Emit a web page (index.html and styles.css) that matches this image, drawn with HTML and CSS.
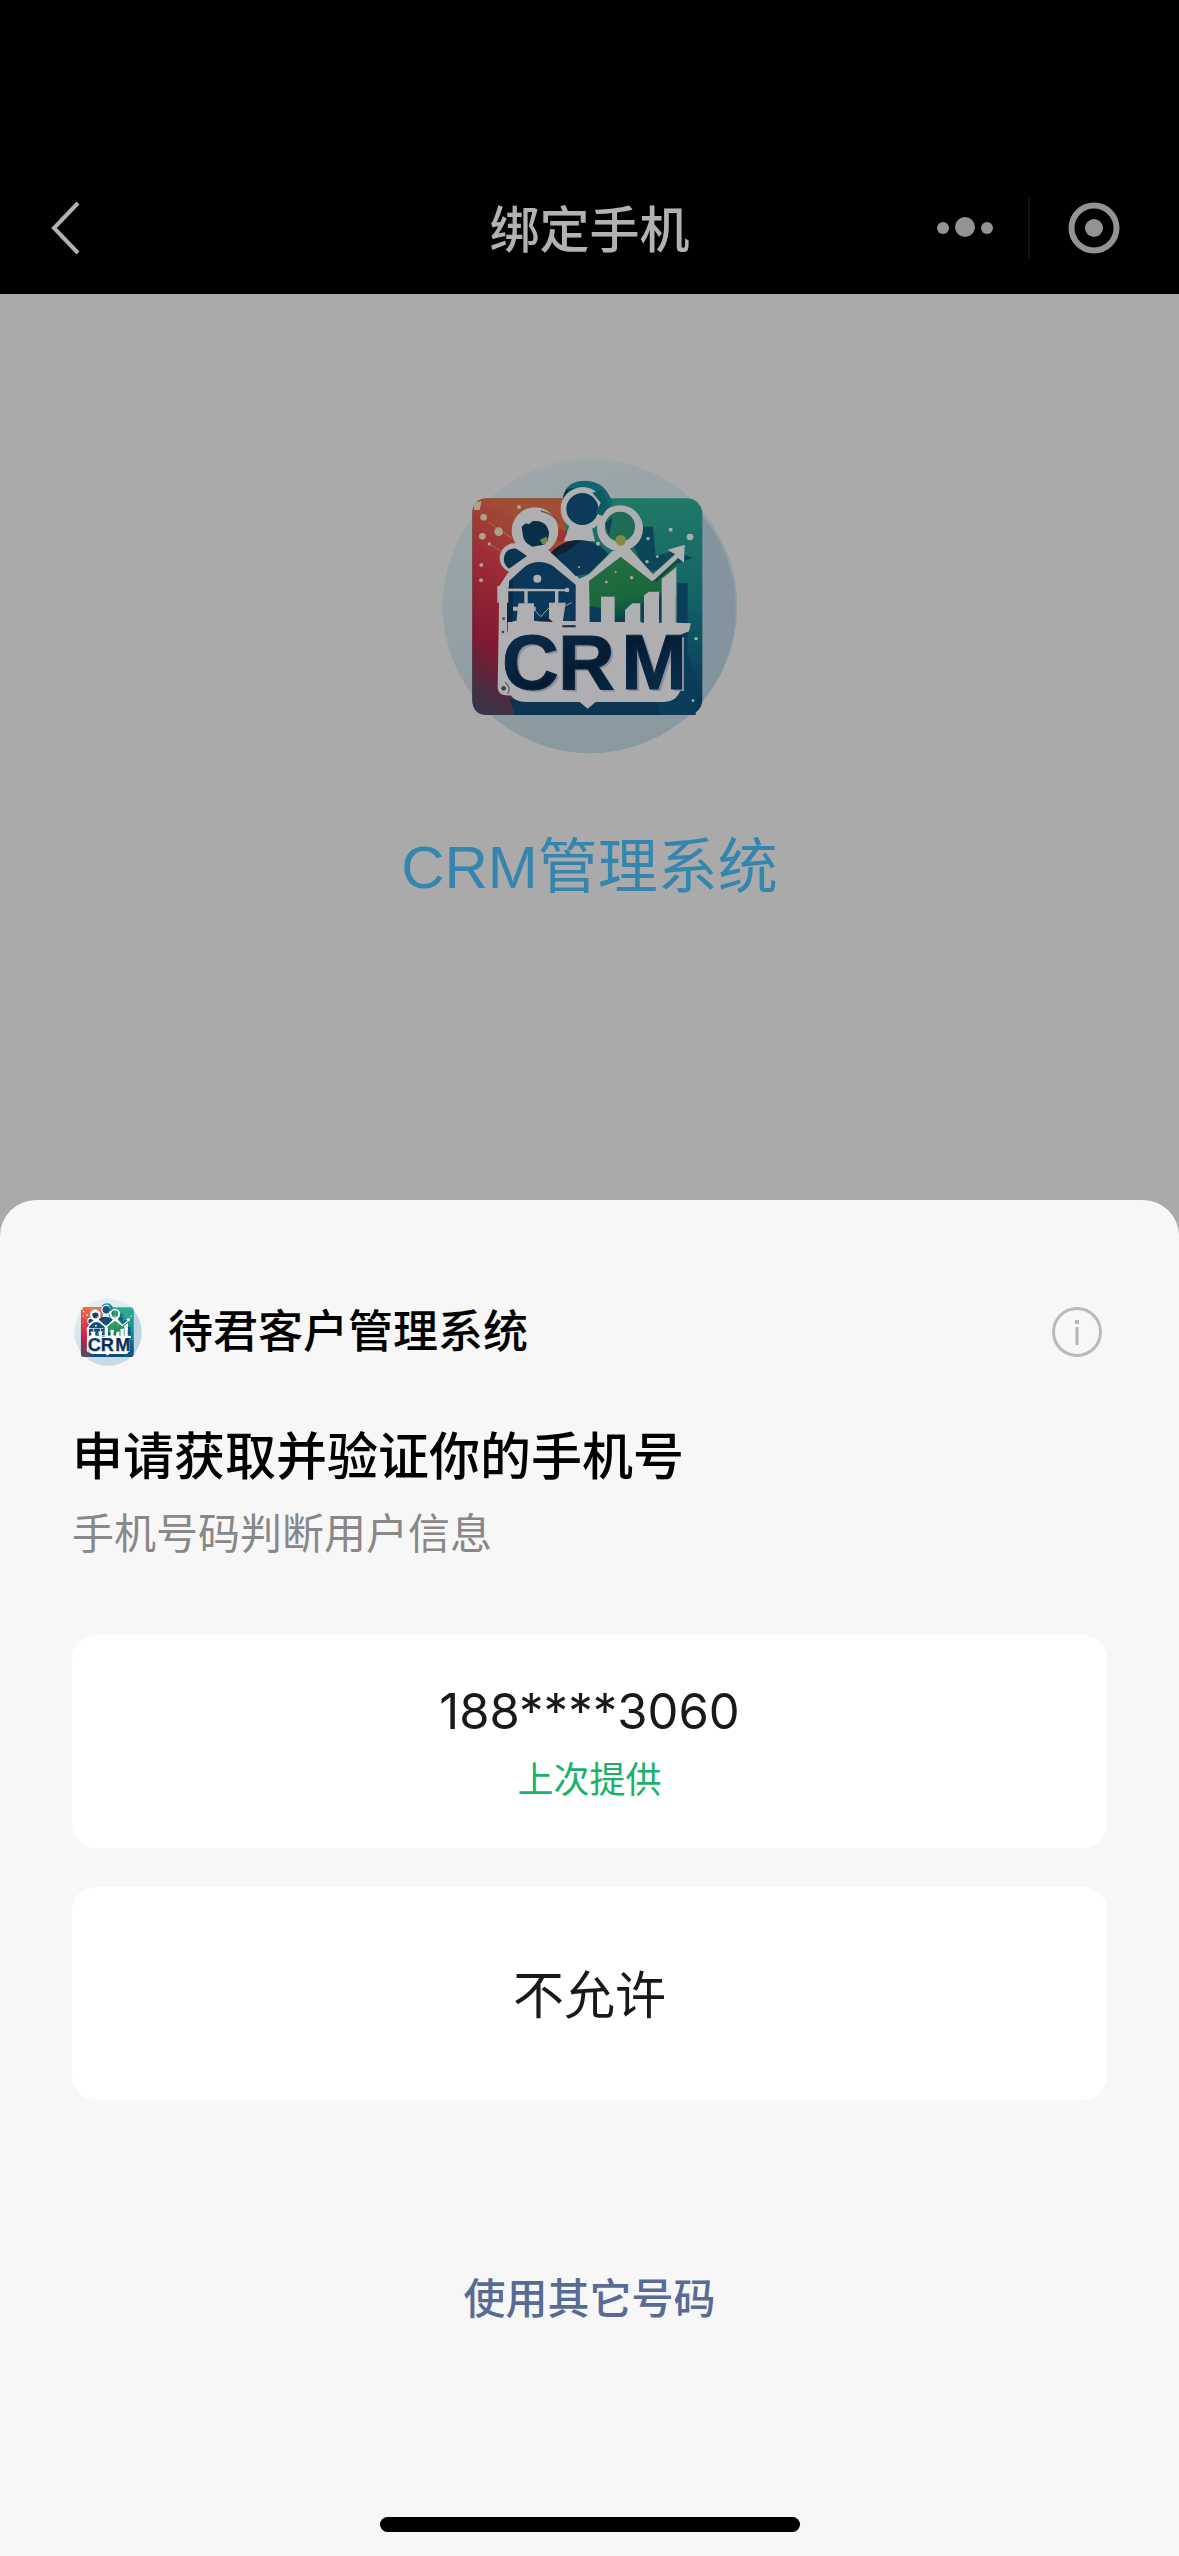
FILE: index.html
```html
<!DOCTYPE html>
<html lang="zh-CN">
<head>
  <meta charset="UTF-8">
  <meta name="viewport" content="width=device-width, initial-scale=1.0">
  <title>绑定手机</title>
  <link rel="stylesheet" href="styles.css">
</head>
<body>
  <!-- logo, used on the page and in the sheet -->
  <svg class="defs" aria-hidden="true">
    <defs>
      <linearGradient id="disc" x1="0" y1="0" x2="0.3" y2="1">
        <stop offset="0" stop-color="#e6f3f5"/>
        <stop offset="1" stop-color="#c6dbe5"/>
      </linearGradient>
      <linearGradient id="tile" x1="0" y1="0" x2="0" y2="1">
        <stop offset="0" stop-color="#2fae94"/>
        <stop offset="0.45" stop-color="#1b9092"/>
        <stop offset="0.8" stop-color="#116088"/>
        <stop offset="1" stop-color="#0f4a74"/>
      </linearGradient>
      <linearGradient id="tileRed" x1="0.3" y1="0" x2="0" y2="1">
        <stop offset="0" stop-color="#e8704c"/>
        <stop offset="0.3" stop-color="#e0404c"/>
        <stop offset="0.65" stop-color="#b82446"/>
        <stop offset="0.9" stop-color="#5c4662"/>
        <stop offset="1" stop-color="#4f5268"/>
      </linearGradient>
      <linearGradient id="leaf" x1="0" y1="0" x2="0.3" y2="1">
        <stop offset="0" stop-color="#39a05a"/>
        <stop offset="0.7" stop-color="#239457"/>
        <stop offset="1" stop-color="#0f5a70"/>
      </linearGradient>
      <linearGradient id="ink" x1="0" y1="0" x2="1" y2="1">
        <stop offset="0" stop-color="#0f4a78"/>
        <stop offset="0.5" stop-color="#082748"/>
        <stop offset="1" stop-color="#114b78"/>
      </linearGradient>
      <symbol id="crm-logo" viewBox="39 56 888 888">
        <circle cx="483" cy="500" r="442" fill="url(#disc)"/>
        <path d="M805 210A442 442 0 0 1 805 805Z" fill="#bcd4e3"/>
        <rect x="130" y="177" width="690" height="650" rx="46" fill="url(#tile)"/>
        <path d="M176 177H410V500L250 827H176Q130 827 130 781V223Q130 177 176 177Z" fill="url(#tileRed)"/>
        <path d="M240 780H560L500 827H262Z" fill="#104d76"/>
        <path d="M745 432H776V640L800 720V827H690V560H745Z" fill="#105780"/>
        <path d="M610 310L635 262L672 262L680 350L735 335L792 355L740 375L650 400Z" fill="#12667f"/>
        <path d="M402 172Q412 124 470 124Q530 126 550 190L520 250H410Z" fill="#1793a0"/>
        <path d="M402 172L412 150L440 145L410 200Z" fill="#104770"/>

        <!-- white silhouette -->
        <g fill="#fbfafc">
          <circle cx="461" cy="209" r="66"/>
          <circle cx="573" cy="267" r="69"/>
          <circle cx="318" cy="274" r="70"/>
          <circle cx="256" cy="356" r="44"/>
          <path d="M424 250H485L498 306H405Z"/>
          <path d="M300 320H345L452 418L480 405L550 335L600 325L672 405L738 345L716 331L767 316L765 370L746 355L742 388V550L786 552L780 576L757 585V740Q750 786 705 788H500L476 808L452 788H290Q258 788 245 768Q206 770 206 745L211 440L234 405Z"/>
        </g>
        <path d="M366 340Q400 302 455 302Q510 305 538 345L480 402L440 410L420 390Z" fill="#12507c"/>
        <path d="M366 340Q400 302 455 302Q430 330 382 350Z" fill="#173047"/>
        <path d="M390 265L415 280L400 306H385Z" fill="#e5484f"/>
        <circle cx="460" cy="209" r="48" fill="#105482"/>
        <path d="M515 190L490 160L520 150L540 200L520 230L500 222Z" fill="#17818e"/>
        <circle cx="573" cy="262" r="45" fill="#2c9a7b"/>
        <path d="M528 252L550 235L540 290Z" fill="#165f76"/>
        <circle cx="575" cy="303" r="16" fill="#b7c765"/>
        <path d="M278 262L290 252L300 255L310 246Q340 242 354 262L360 278Q360 305 345 316L310 322Q284 310 282 290Z" fill="#0e4269"/>
        <path d="M332 302L352 292L358 306L342 316Z" fill="#a3c26b"/>
        <path d="M225 355Q230 325 262 328L294 350L240 388Q222 374 225 355Z" fill="#0f4a72"/>
        <path d="M240 425L290 380Q330 356 372 380L440 436V545H240Z" fill="#10507f"/>
        <path d="M234 450V580L252 545V420Z" fill="#0e3c62"/>
        <path d="M480 425L575 352L668 425L692 415L745 360V380L700 425V548H560L483 548Z" fill="url(#leaf)"/>
        <path d="M482 500L530 510L585 580L560 548H482Z" fill="#105780"/>
        <path d="M672 470H740V550H640L600 520Z" fill="#10607c"/>

        <!-- buildings and chart bars -->
        <g fill="#fbfafc">
          <path d="M205 440H238V490H205Z"/>
          <path d="M222 447L420 450V456H222ZM286 450H296V492H286ZM378 450H388V492H378Z"/>
          <path d="M268 492H315V570H260ZM360 490H410L398 570H360ZM252 502H320V514H252Z"/>
          <path d="M236 548H590V578H236Z"/>
          <path d="M516 472H557V560H516Z"/>
          <path d="M588 512L610 492H634V570H588Z"/>
          <path d="M645 468L660 457H690V570H645Z"/>
          <path d="M698 418L740 385V560H698Z"/>
          <circle cx="325" cy="418" r="12"/>
          <circle cx="414" cy="452" r="7"/>
        </g>
        <path d="M315 510L335 532L375 490L408 500L428 490" fill="none" stroke="#d8e7ef" stroke-width="3"/>
        <path d="M325 546L350 530L372 548ZM400 558H440V564H400Z" fill="#123a60"/>
        <path d="M678 426L750 360" stroke="#147057" stroke-width="9"/>

        <!-- sparks -->
        <g fill="#f7e9c5">
          <path d="M132 190L158 186L152 212H136Z"/>
          <circle cx="164" cy="234" r="10"/>
          <circle cx="209" cy="277" r="13"/>
          <circle cx="160" cy="291" r="10"/>
          <circle cx="181" cy="314" r="5"/>
          <circle cx="157" cy="377" r="6"/>
          <circle cx="156" cy="423" r="6"/>
          <circle cx="270" cy="203" r="6"/>
        </g>
        <path d="M178 248L248 296M181 314L218 336" stroke="#f0c9b4" stroke-width="2"/>
        <path d="M335 215Q370 222 392 250" fill="none" stroke="#b46a5c" stroke-width="4"/>
        <g fill="#eefaf6">
          <circle cx="725" cy="271" r="6"/>
          <circle cx="783" cy="293" r="10"/>
          <circle cx="657" cy="298" r="5"/>
          <circle cx="685" cy="352" r="4"/>
          <circle cx="654" cy="367" r="5"/>
          <circle cx="507" cy="313" r="6"/>
          <circle cx="801" cy="598" r="5"/>
          <circle cx="792" cy="784" r="4"/>
          <circle cx="450" cy="383" r="3"/>
          <circle cx="608" cy="415" r="5"/>
          <circle cx="532" cy="428" r="4"/>
          <circle cx="560" cy="398" r="3"/>
        </g>
        <g fill="#4d6272">
          <circle cx="224" cy="747" r="7"/>
          <circle cx="224" cy="538" r="4"/>
          <circle cx="222" cy="578" r="4"/>
        </g>
        <path d="M228 728Q248 745 236 764" fill="none" stroke="#8696a1" stroke-width="4"/>
        <text class="logo-shade" x="226 394 584" y="756">CRM</text>
        <text class="logo-text" x="219 387 577" y="749">CRM</text>
      </symbol>
    </defs>
  </svg>

  <div class="page">
    <header class="navbar">
      <button type="button" class="back" aria-label="返回">
        <svg width="40" height="60" viewBox="0 0 40 60" fill="none" stroke="#fff" stroke-width="4">
          <path d="M31 5L7 30L31 55"/>
        </svg>
      </button>
      <h1>绑定手机</h1>
      <div class="capsule">
        <button type="button" aria-label="更多">
          <svg width="60" height="60" viewBox="0 0 60 60" fill="#d3d3d3">
            <circle cx="8" cy="30" r="6"/>
            <circle cx="30" cy="29" r="10"/>
            <circle cx="52" cy="30" r="6"/>
          </svg>
        </button>
        <button type="button" aria-label="关闭">
          <svg width="60" height="60" viewBox="0 0 60 60">
            <circle cx="30" cy="30" r="22.5" fill="none" stroke="#d3d3d3" stroke-width="6"/>
            <circle cx="30" cy="30" r="9" fill="#d3d3d3"/>
          </svg>
        </button>
      </div>
    </header>
    <main class="intro">
      <svg class="logo" role="img" aria-label="CRM"><use href="#crm-logo"/></svg>
      <h2>CRM管理系统</h2>
    </main>
  </div>

  <div class="mask"></div>

  <section class="sheet" role="dialog" aria-labelledby="sheetTitle">
    <div class="app">
      <svg class="app-logo" aria-hidden="true"><use href="#crm-logo"/></svg>
      <span class="app-name">待君客户管理系统</span>
      <button type="button" class="info" aria-label="说明">
        <svg width="60" height="60" viewBox="0 0 60 60">
          <circle cx="30" cy="30" r="23.5" fill="none" stroke="#bbb" stroke-width="3"/>
          <path d="M28 18h4v4h-4zM28.5 25h3v18h-3z" fill="#b5b5b5"/>
        </svg>
      </button>
    </div>
    <h3 id="sheetTitle">申请获取并验证你的手机号</h3>
    <p class="desc">手机号码判断用户信息</p>
    <div class="options">
      <button type="button" class="option">
        <span class="number">188****3060</span>
        <span class="hint">上次提供</span>
      </button>
      <button type="button" class="option">不允许</button>
    </div>
    <a href="#" class="other">使用其它号码</a>
    <div class="home-bar"></div>
  </section>
</body>
</html>
```
FILE: styles.css
```css
* {
  box-sizing: border-box;
}
body {
  margin: 0;
  background-color: #f4f4f4;
  font-family: Inter, "Noto Sans CJK SC", sans-serif;
}
h1, h2, h3, p {
  margin: 0;
}
button {
  padding: 0;
  border: none;
  background: none;
  font-family: inherit;
  color: inherit;
  cursor: pointer;
}
svg {
  display: block;
}
.defs {
  position: absolute;
  width: 0;
  height: 0;
}
.page {
  min-height: 100vh;
}
.navbar {
  display: grid;
  grid-template-columns: 1fr auto 1fr;
  align-items: center;
  padding: 162px 42px 0;
  height: 294px;
  background-color: #000;
  color: #fff;
}
.back {
  justify-self: start;
  padding-left: 5px;
}
.navbar h1 {
  padding-top: 4px;
  font-size: 50px;
  font-weight: 500;
  line-height: 72px;
}
.capsule {
  display: flex;
  justify-self: end;
}
.capsule button:first-child {
  padding: 0 33px;
  border-right: 2px solid #1a1a1a;
}
.capsule button:last-child {
  padding: 0 13px 0 34px;
}
.intro {
  display: flex;
  flex-direction: column;
  align-items: center;
  padding-top: 164px;
}
.logo {
  width: 296px;
  height: 296px;
}
.logo-text, .logo-shade {
  font-family: "Liberation Sans", Arial, sans-serif;
  font-size: 236px;
  font-weight: bold;
}
.logo-text {
  fill: url(#ink);
  stroke: #0c3a62;
  stroke-width: 3px;
}
.logo-shade {
  fill: #c3cbda;
}
.intro h2 {
  margin-top: 72px;
  font-family: "Liberation Sans", "Noto Sans CJK SC", sans-serif;
  font-size: 60px;
  font-weight: 400;
  line-height: 84px;
  color: #4cc0fa;
}
.mask {
  position: fixed;
  inset: 0;
  background-color: rgba(0, 0, 0, 0.3);
}
.sheet {
  position: fixed;
  left: 0;
  right: 0;
  bottom: 0;
  display: flex;
  flex-direction: column;
  padding: 96px 72px 24px;
  border-radius: 36px 36px 0 0;
  background-color: #f7f7f7;
}
.app {
  display: flex;
  align-items: center;
  height: 72px;
}
.app-logo {
  width: 72px;
  height: 72px;
  padding: 2px;
}
.app-name {
  margin-left: 24px;
  font-size: 45px;
  font-weight: 500;
  line-height: 60px;
}
.info {
  margin-left: auto;
}
.sheet h3 {
  margin-top: 53px;
  font-size: 51px;
  font-weight: 500;
  line-height: 72px;
}
.desc {
  margin-top: 11px;
  font-size: 42px;
  line-height: 60px;
  color: #888;
}
.options {
  display: flex;
  flex-direction: column;
  gap: 39px;
  margin-top: 71px;
}
.option {
  display: flex;
  flex-direction: column;
  align-items: center;
  justify-content: center;
  height: 213px;
  padding-top: 4px;
  border-radius: 24px;
  background-color: #fff;
  font-size: 51px;
  line-height: 72px;
  color: #191919;
}
.number {
  font-size: 49px;
}
.hint {
  font-size: 36px;
  line-height: 64px;
  color: #18b26b;
}
.other {
  align-self: center;
  margin-top: 169px;
  font-size: 42px;
  font-weight: 500;
  line-height: 60px;
  color: #576b95;
  text-decoration: none;
}
.home-bar {
  align-self: center;
  width: 420px;
  height: 15px;
  margin-top: 188px;
  border-radius: 8px;
  background-color: #000;
}
```
